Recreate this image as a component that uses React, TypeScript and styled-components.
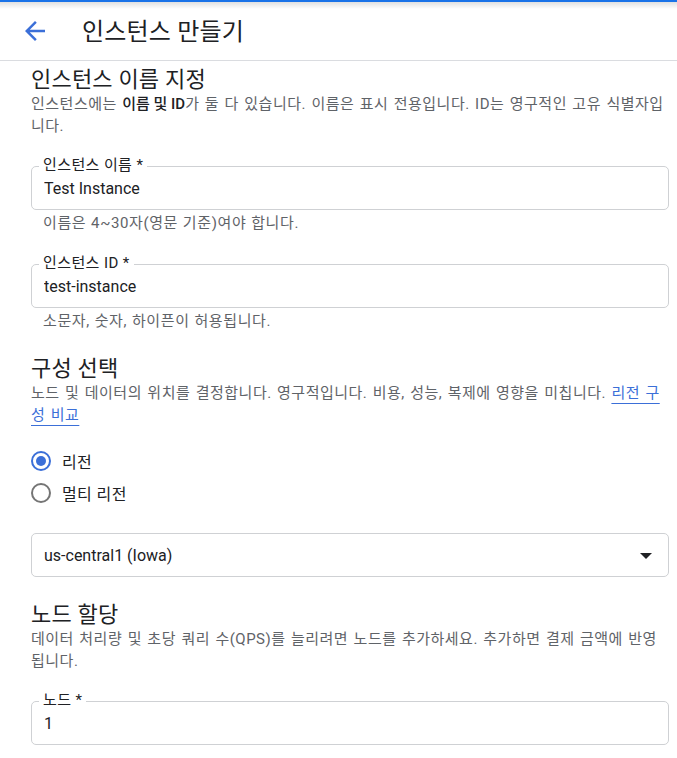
import React, {useState} from 'react';
import {styled, createGlobalStyle} from "styled-components";

const GlobalStyle = createGlobalStyle`
  html, body {
    margin: 0;
    padding: 0;
    background: #fff;
  }
  body {
    font-family: Roboto, "Noto Sans CJK KR", sans-serif;
    color: #202124;
  }
`

const Page = styled.div`
  width: 677px;
  height: 758px;
  overflow: hidden;
  display: flex;
  flex-direction: column;
`
const Header = styled.header`
  height: 61px;
  flex-shrink: 0;
  display: flex;
  align-items: center;
  padding: 0 0 0 20px;
  border-bottom: 1px solid #dadce0;
  background: linear-gradient(#1a73e8 0, #1a73e8 2px, rgba(0, 0, 0, 0.12) 2px, rgba(255, 255, 255, 0) 9px), #fff;
  box-sizing: border-box;
`
const BackButton = styled.button`
  width: 30px;
  height: 30px;
  border: none;
  background: none;
  padding: 0;
  display: flex;
  align-items: center;
  justify-content: center;
  color: #3b6fd8;
  cursor: pointer;
  margin-right: 32px;
  margin-top: 1px;
`
const Title = styled.h1`
  margin: 0;
  font-size: 24px;
  font-weight: 400;
  letter-spacing: 0.2px;
  color: #202124;
  margin-top: -2px;
`
const Content = styled.main`
  padding: 6px 8px 0 31px;
  display: flex;
  flex-direction: column;
`
const SectionTitle = styled.h2<{ $top?: number }>`
  margin: ${p => p.$top ?? 0}px 0 0;
  font-size: 22px;
  line-height: 26px;
  font-weight: 400;
  letter-spacing: 0.2px;
  color: #202124;
`
const Description = styled.p`
  margin: 0;
  font-size: 15px;
  line-height: 22px;
  letter-spacing: 0.5px;
  word-spacing: 1.2px;
  color: #5f6368;

  b {
    font-weight: 500;
    letter-spacing: 0;
    word-spacing: 0;
    color: #202124;
  }

  a {
    color: #3b6fd8;
    text-decoration: underline;
    text-underline-offset: 5px;
    cursor: pointer;
  }
`
const Field = styled.div<{ $top: number }>`
  position: relative;
  margin-top: ${p => p.$top}px;
  height: 44px;
  border: 1px solid #cfd1d4;
  border-radius: 5px;
  display: flex;
  align-items: center;
  padding: 0 12px;
  box-sizing: border-box;
`
const FieldLabel = styled.label`
  position: absolute;
  top: -11px;
  left: 7px;
  padding: 0 4px;
  background: #fff;
  font-size: 15px;
  line-height: 18px;
  letter-spacing: 0.4px;
  color: #202124;
`
const FieldInput = styled.input`
  border: none;
  outline: none;
  padding: 0;
  margin: 0;
  width: 100%;
  font-family: Roboto, "Noto Sans CJK KR", sans-serif;
  font-size: 16px;
  color: #202124;
  background: transparent;
  margin-top: 1px;
`
const Helper = styled.div`
  margin-top: 3px;
  padding-left: 12px;
  font-size: 15px;
  line-height: 20px;
  letter-spacing: 0.6px;
  word-spacing: 0.6px;
  color: #5f6368;
`
const RadioGroup = styled.div`
  margin-top: 19px;
  display: flex;
  flex-direction: column;
`
const RadioRow = styled.label`
  height: 32px;
  display: flex;
  align-items: center;
  gap: 11px;
  font-size: 16px;
  letter-spacing: 0.4px;
  color: #202124;
  cursor: pointer;
`
const RadioCircle = styled.span<{ $checked: boolean }>`
  width: 20px;
  height: 20px;
  box-sizing: border-box;
  border-radius: 50%;
  border: 2px solid ${p => p.$checked ? '#3b6fd8' : '#757575'};
  display: flex;
  align-items: center;
  justify-content: center;

  &::after {
    content: '';
    width: 10px;
    height: 10px;
    border-radius: 50%;
    background: #3b6fd8;
    display: ${p => p.$checked ? 'block' : 'none'};
  }
`
const SelectBox = styled.div`
  margin-top: 24px;
  height: 44px;
  border: 1px solid #cfd1d4;
  border-radius: 5px;
  display: flex;
  align-items: center;
  justify-content: space-between;
  padding: 0 16px 0 12px;
  box-sizing: border-box;
  font-size: 16px;
  color: #202124;
  cursor: pointer;
`
const Caret = styled.span`
  width: 0;
  height: 0;
  border-left: 6px solid transparent;
  border-right: 6px solid transparent;
  border-top: 6px solid #202124;
  margin-top: 1px;
`

const ArrowBack = () => (
  <svg width="30" height="30" viewBox="0 0 24 24" fill="currentColor">
    <path d="M20 11H7.83l5.59-5.59L12 4l-8 8 8 8 1.41-1.41L7.83 13H20v-2z"/>
  </svg>
)

const App: React.FC = () => {
  const [name, setName] = useState('Test Instance')
  const [id, setId] = useState('test-instance')
  const [nodes, setNodes] = useState('1')
  const [config, setConfig] = useState<'region' | 'multi'>('region')

  return (
    <Page>
      <GlobalStyle/>
      <Header>
        <BackButton aria-label="뒤로"><ArrowBack/></BackButton>
        <Title>인스턴스 만들기</Title>
      </Header>
      <Content>
        <SectionTitle>인스턴스 이름 지정</SectionTitle>
        <Description>
          인스턴스에는 <b>이름 및 ID</b>가 둘 다 있습니다. 이름은 표시 전용입니다. ID는 영구적인 고유 식별자입니다.
        </Description>

        <Field $top={29}>
          <FieldLabel>인스턴스 이름 *</FieldLabel>
          <FieldInput value={name} onChange={e => setName(e.target.value)}/>
        </Field>
        <Helper>이름은 4~30자(영문 기준)여야 합니다.</Helper>

        <Field $top={31}>
          <FieldLabel>인스턴스 ID *</FieldLabel>
          <FieldInput value={id} onChange={e => setId(e.target.value)}/>
        </Field>
        <Helper>소문자, 숫자, 하이픈이 허용됩니다.</Helper>

        <SectionTitle $top={25}>구성 선택</SectionTitle>
        <Description>
          노드 및 데이터의 위치를 결정합니다. 영구적입니다. 비용, 성능, 복제에 영향을 미칩니다. <a>리전 구성 비교</a>
        </Description>

        <RadioGroup>
          <RadioRow onClick={() => setConfig('region')}>
            <RadioCircle $checked={config === 'region'}/>
            리전
          </RadioRow>
          <RadioRow onClick={() => setConfig('multi')}>
            <RadioCircle $checked={config === 'multi'}/>
            멀티 리전
          </RadioRow>
        </RadioGroup>

        <SelectBox>
          <span>us-central1 (Iowa)</span>
          <Caret/>
        </SelectBox>

        <SectionTitle $top={25}>노드 할당</SectionTitle>
        <Description>
          데이터 처리량 및 초당 쿼리 수(QPS)를 늘리려면 노드를 추가하세요. 추가하면 결제 금액에 반영됩니다.
        </Description>

        <Field $top={29}>
          <FieldLabel>노드 *</FieldLabel>
          <FieldInput value={nodes} onChange={e => setNodes(e.target.value)}/>
        </Field>
      </Content>
    </Page>
  )
}
export default App;
